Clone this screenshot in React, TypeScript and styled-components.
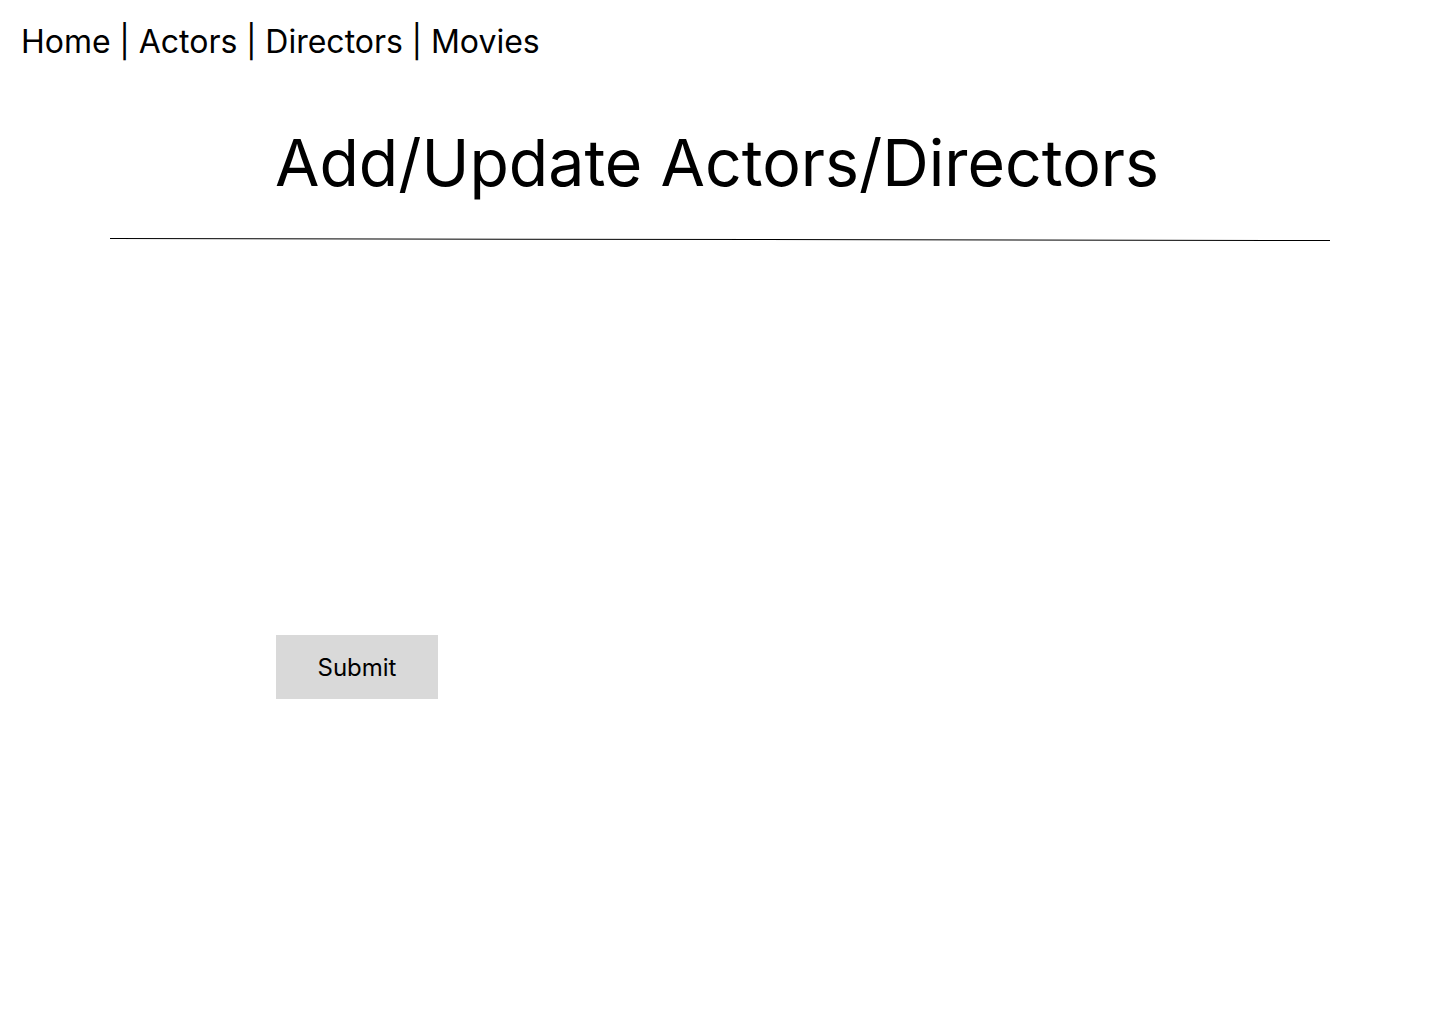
import React from 'react';
import styled, { createGlobalStyle } from 'styled-components';

const GlobalStyle = createGlobalStyle`
  body {
    margin: 0;
    background: #ffffff;
    font-family: Inter, "Noto Sans", sans-serif;
    color: #000000;
  }
`;

const Page = styled.div`
  width: 1440px;
  min-height: 1024px;
`;

const Nav = styled.nav`
  display: flex;
  align-items: center;
  padding: 21px 0 0 21px;
  font-size: 32px;
  line-height: 42px;
`;

const NavLink = styled.a`
  color: #000000;
  text-decoration: none;
  cursor: pointer;
`;

const Separator = styled.span`
  margin: 0 8.7px;
`;

const Title = styled.h1`
  margin: 60px 0 0;
  padding-right: 6px;
  text-align: center;
  font-size: 64.4px;
  font-weight: 400;
  line-height: 80px;
`;

const Rule = styled.div`
  width: 1220px;
  height: 1px;
  margin: 36px auto 0;
  background: #000000;
  transform: rotate(0.094deg);
`;

const Form = styled.form`
  display: flex;
  flex-direction: column;
  align-items: flex-start;
  padding: 395px 0 0 276px;
`;

const SubmitButton = styled.button`
  width: 162px;
  height: 64px;
  border: none;
  background: #d9d9d9;
  font-family: Inter, "Noto Sans", sans-serif;
  font-size: 24px;
  color: #000000;
  cursor: pointer;
`;

const links = ['Home', 'Actors', 'Directors', 'Movies'];

const App: React.FC = () => {
  return (
    <Page>
      <GlobalStyle />
      <Nav>
        {links.map((label, i) => (
          <React.Fragment key={label}>
            {i > 0 && <Separator>|</Separator>}
            <NavLink>{label}</NavLink>
          </React.Fragment>
        ))}
      </Nav>
      <Title>Add/Update Actors/Directors</Title>
      <Rule />
      <Form onSubmit={e => e.preventDefault()}>
        <SubmitButton type="submit">Submit</SubmitButton>
      </Form>
    </Page>
  );
};

export default App;
